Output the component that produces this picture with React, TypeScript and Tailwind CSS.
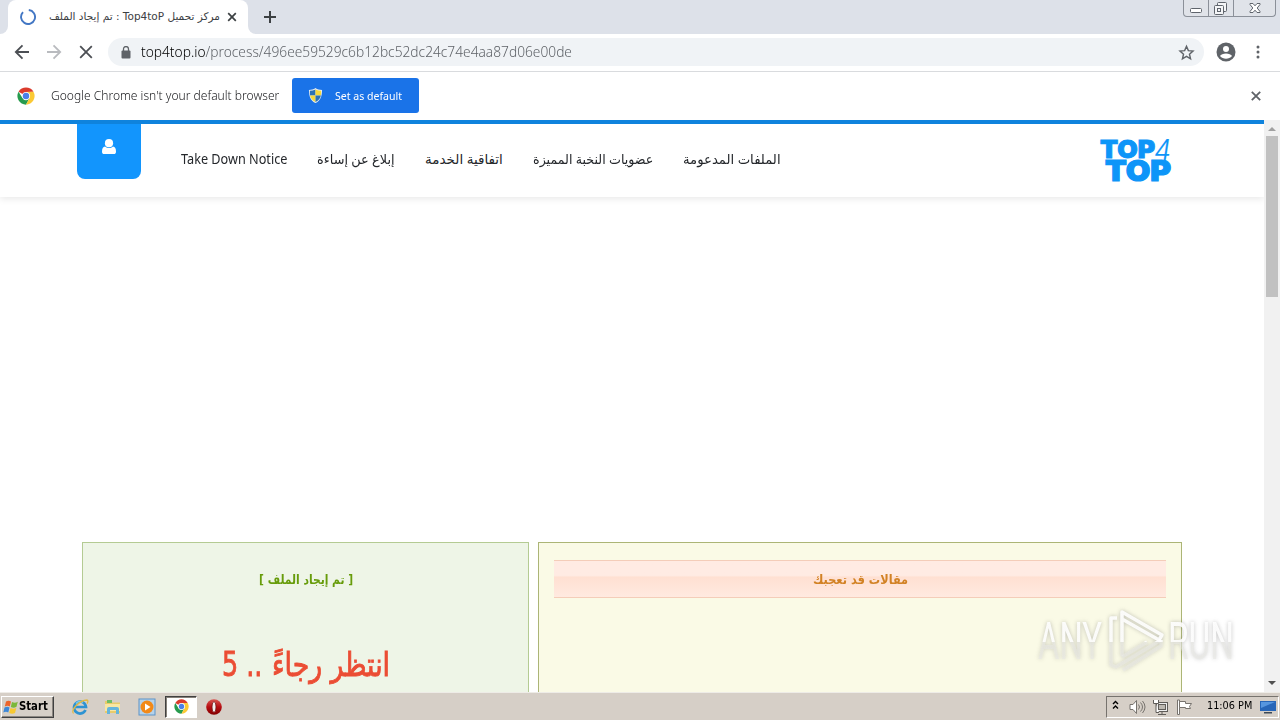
import { useLayoutEffect, useRef } from 'react'
import type { ReactNode } from 'react'

interface FitTextProps {
  width: number
  className?: string
  rtl?: boolean
  children: ReactNode
}

// Single line of text squeezed or stretched to a fixed width
function FitText({ width, className = '', rtl = false, children }: FitTextProps) {
  const outer = useRef<HTMLSpanElement>(null)
  const inner = useRef<HTMLSpanElement>(null)

  useLayoutEffect(() => {
    if (!outer.current || !inner.current) return
    outer.current.style.width = `${width}px`
    inner.current.style.transform = `scaleX(${width / inner.current.offsetWidth})`
  }, [width])

  return (
    <span ref={outer} className="flex shrink-0">
      <span ref={inner} dir={rtl ? 'rtl' : 'ltr'} className={`block shrink-0 origin-left whitespace-nowrap ${className}`}>
        {children}
      </span>
    </span>
  )
}

function ChromeLogo({ className }: { className: string }) {
  return (
    <svg viewBox="0 0 48 48" className={className}>
      <path d="M24 24 4.1 12.5A23 23 0 0 1 43.9 12.5L24 13Z" fill="#db3b2c" />
      <path d="M4.1 12.5A23 23 0 0 0 24 47l9.5-17.5L24 24 14.5 29.5Z" fill="#279b4e" />
      <path d="M43.9 12.5A23 23 0 0 1 24 47l9.5-17.5L24 13Z" fill="#fbc934" />
      <circle cx="24" cy="24" r="11" fill="#fff" />
      <circle cx="24" cy="24" r="8.6" fill="#4a80e8" />
    </svg>
  )
}

function TabStrip() {
  return (
    <div className="flex h-[34px] shrink-0 bg-[#dde1e9]">
      <div className="flex w-2 items-end bg-white">
        <div className="h-full w-2 rounded-br-lg bg-[#dde1e9]" />
      </div>
      <div className="flex w-60 items-center rounded-t-lg bg-white pl-3">
        <svg viewBox="0 0 16 16" className="size-4 shrink-0" fill="none">
          <path d="M8.8 1A7 7 0 1 1 3 3.1" stroke="#4377c4" strokeWidth="1.9" />
        </svg>
        <div className="ml-[13px]">
          <FitText width={171} rtl className="font-['DejaVu_Sans',sans-serif] text-[10.5px] text-[#3c4043]">
            مركز تحميل Top4toP : تم إيجاد الملف
          </FitText>
        </div>
        <svg viewBox="0 0 10 10" className="ml-[7px] size-[10px] shrink-0">
          <path d="m1.2 1.2 7.6 7.6m0-7.6L1.2 8.8" stroke="#3c4043" strokeWidth="1.7" />
        </svg>
      </div>
      <div className="flex w-2 bg-white">
        <div className="h-full w-2 rounded-bl-lg bg-[#dde1e9]" />
      </div>
      <svg viewBox="0 0 12 12" className="mt-[11px] ml-2 size-3">
        <path d="M6 0v12M0 6h12" stroke="#3c4043" strokeWidth="2" />
      </svg>
      <div className="mr-1 ml-auto flex h-[17px] w-[93px] rounded-b border border-t-0 border-[#8b9099] bg-[#e0e3e9]">
        <div className="w-[25px] border-r border-[#8b9099]">
          <svg viewBox="0 0 24 16" className="h-4 w-6" fill="#fff" stroke="#5f646c">
            <rect x="6.5" y="8.5" width="11" height="4" rx="1" />
          </svg>
        </div>
        <div className="w-[25px] border-r border-[#8b9099]">
          <svg viewBox="0 0 24 16" className="h-4 w-6" fill="#f4f5f7" stroke="#5f646c">
            <rect x="8.5" y="2.5" width="9" height="9" rx="1" />
            <rect x="5.5" y="5.5" width="9" height="9" rx="1" />
            <rect x="8.5" y="8.5" width="3" height="3" />
          </svg>
        </div>
        <div className="flex flex-1 justify-center">
          <svg viewBox="0 0 14 16" className="h-4 w-[14px]">
            <path
              d="M2 3.5h3l2 2.3 2-2.3h3v1L9.2 8l2.8 3.5v1H9l-2-2.3-2 2.3H2v-1L4.8 8 2 4.5Z"
              fill="#fff"
              stroke="#5f646c"
            />
          </svg>
        </div>
      </div>
    </div>
  )
}

function Toolbar() {
  return (
    <div className="flex h-[38px] shrink-0 items-center border-b border-[#d9dbde] bg-white pb-px pl-[14px]">
      <svg viewBox="0 0 16 16" className="size-4" fill="none" stroke="#4c4f54" strokeWidth="1.8">
        <path d="M15 8H2m6.500-6.700L1.800 8l6.700 6.700" />
      </svg>
      <svg viewBox="0 0 16 16" className="ml-4 size-4" fill="none" stroke="#b9bbbf" strokeWidth="1.8">
        <path d="M1 8h13M7.500 1.300 14.200 8l-6.700 6.700" />
      </svg>
      <svg viewBox="0 0 14 14" className="ml-[17px] size-[14px]" fill="none" stroke="#4c4f54" strokeWidth="1.8">
        <path d="m1.200 1.200 11.600 11.600m0-11.600L1.200 12.800" />
      </svg>
      <div className="ml-[15px] flex h-7 w-[1096px] items-center rounded-full bg-[#f0f3f6] pr-[9px] pl-[13px]">
        <svg viewBox="0 0 10 13" className="h-[13px] w-[10px]">
          <rect x="0.5" y="4.5" width="9" height="8" rx="1" fill="#5f6368" />
          <path d="M2.500 5V3a2.500 2.500 0 0 1 5 0v2" fill="none" stroke="#5f6368" strokeWidth="1.3" />
        </svg>
        <div className="ml-[10px]">
          <FitText width={431} className="font-['Noto_Sans',sans-serif] text-sm font-light text-[#5f6368]">
            <span className="text-black">top4top.io</span>/process/496ee59529c6b12bc52dc24c74e4aa87d06e00de
          </FitText>
        </div>
        <svg viewBox="0 0 24 24" className="ml-auto size-[17px]" fill="none" stroke="#5f6368" strokeWidth="2">
          <path d="m12 3.200 2.600 6.100 6.600.6-5 4.400 1.500 6.500-5.700-3.400-5.700 3.400 1.500-6.500-5-4.400 6.600-.6Z" />
        </svg>
      </div>
      <svg viewBox="0 0 20 20" className="ml-3 size-5">
        <circle cx="10" cy="10" r="9.5" fill="#5f6368" />
        <circle cx="10" cy="7" r="3" fill="#fff" />
        <path d="M4 14c1.500-3.400 10.500-3.400 12 0-3 3.700-9 3.700-12 0Z" fill="#fff" />
      </svg>
      <svg viewBox="0 0 4 14" className="ml-5 h-[14px] w-1" fill="#5f6368">
        <circle cx="2" cy="2" r="1.5" />
        <circle cx="2" cy="7" r="1.5" />
        <circle cx="2" cy="12" r="1.5" />
      </svg>
    </div>
  )
}

function DefaultBrowserBar() {
  return (
    <div className="flex h-12 shrink-0 items-center bg-white pb-px pl-[17px]">
      <ChromeLogo className="mt-px size-[18px]" />
      <div className="ml-4">
        <FitText width={228} className="font-['Noto_Sans',sans-serif] text-[13px] font-light text-[#202124]">
          Google Chrome isn't your default browser
        </FitText>
      </div>
      <button className="ml-[13px] flex h-[35px] w-[127px] items-center rounded-[3px] bg-[#1a73e8] pl-4">
        <svg viewBox="0 0 16 16" className="size-[15px]">
          <path d="M8 0c2 1.500 4.500 2 7 2 0 7-2 11.500-7 14C3 13.500 1 9 1 2c2.500 0 5-.5 7-2Z" fill="#e8eef2" />
          <path d="M8 1.500V8H2.200C2 6.500 2 5 2 3c2 0 4-.5 6-1.500Z" fill="#2c72b5" />
          <path d="M8 1.500V8h5.800c.2-1.500.2-3 .2-5-2 0-4-.5-6-1.500Z" fill="#f6d93b" />
          <path d="M8 8H2.200C3 11 4.500 13.500 8 15Z" fill="#f6d93b" />
          <path d="M8 8h5.800C13 11 11.500 13.500 8 15Z" fill="#2c72b5" />
        </svg>
        <div className="ml-3">
          <FitText width={67} className="font-['Noto_Sans',sans-serif] text-[11.5px] text-white">
            Set as default
          </FitText>
        </div>
      </button>
      <svg viewBox="0 0 10 10" className="mt-px mr-[19px] ml-auto size-[10px]">
        <path d="m.8.8 8.400 8.400m0-8.400L.8 9.200" stroke="#5f6368" strokeWidth="1.8" />
      </svg>
    </div>
  )
}

const navLinks = [
  { label: 'Take Down Notice', width: 106, rtl: false },
  { label: 'إبلاغ عن إساءة', width: 78, rtl: true },
  { label: 'اتفاقية الخدمة', width: 78, rtl: true },
  { label: 'عضويات النخبة المميزة', width: 120, rtl: true },
  { label: 'الملفات المدعومة', width: 98, rtl: true },
]

function SiteLogo() {
  return (
    <svg
      viewBox="0 0 74 46"
      className="mr-[91px] ml-auto h-[46px] w-[74px] font-['Inter',sans-serif]"
      fill="#0d95f8"
      stroke="#0d95f8"
    >
      <text x="1" y="20" fontSize="24.500" fontWeight="900" strokeWidth="0.9" textLength="55" lengthAdjust="spacingAndGlyphs">
        TOP
      </text>
      <text x="6" y="43" fontSize="29" fontWeight="900" strokeWidth="1.200" textLength="66" lengthAdjust="spacingAndGlyphs">
        TOP
      </text>
      <text
        x="55"
        y="22"
        fontSize="28"
        fontWeight="300"
        fontStyle="italic"
        strokeWidth="0.2"
        textLength="17"
        lengthAdjust="spacingAndGlyphs"
      >
        4
      </text>
    </svg>
  )
}

function SiteHeader() {
  return (
    <header className="flex h-[77px] shrink-0 border-t-4 border-[#0f83dd] bg-white pl-[77px] shadow-[0_2px_7px_rgba(0,0,0,0.09)]">
      <div className="flex h-[55px] w-16 justify-center rounded-b-lg bg-[#1295fd] pt-[15px]">
        <svg viewBox="0 0 14 16" className="h-4 w-[14px]" fill="#fff">
          <circle cx="7" cy="4.2" r="4.1" />
          <path d="M3 7.500c2.500 2 5.500 2 8 0 2 .2 3 2 3 5.200 0 1.500-.8 2.300-2.200 2.300H2.200C.8 15 0 14.200 0 12.700 0 9.500 1 7.700 3 7.500Z" />
        </svg>
      </div>
      <nav className="ml-10 flex h-[70px] items-center gap-[30px]">
        {navLinks.map((link) => (
          <FitText
            key={link.label}
            width={link.width}
            rtl={link.rtl}
            className="font-['Noto_Sans','DejaVu_Sans',sans-serif] text-[13.5px] text-[#24272b]"
          >
            {link.label}
          </FitText>
        ))}
      </nav>
      <div className="ml-auto flex items-start pt-[14px]">
        <SiteLogo />
      </div>
    </header>
  )
}

function Scrollbar() {
  return (
    <div className="flex w-4 shrink-0 flex-col items-center bg-[#f1f1f1] pt-[7px] pb-[7px]">
      <svg viewBox="0 0 8 4" className="h-1 w-2" fill="#a0a0a0">
        <path d="M0 4 4 0l4 4Z" />
      </svg>
      <div className="mt-[5px] h-[161px] w-3 bg-[#c1c1c1]" />
      <svg viewBox="0 0 8 4" className="mt-auto h-1 w-2" fill="#505050">
        <path d="m0 0 4 4 4-4Z" />
      </svg>
    </div>
  )
}

function SitePage() {
  return (
    <div className="flex h-[572px] shrink-0 overflow-hidden bg-white">
      <div className="flex w-[1264px] flex-col">
        <SiteHeader />
        <main className="mt-[345px] flex flex-1 items-stretch gap-[9px] pl-[82px]">
          <section className="flex w-[447px] flex-col items-center border border-b-0 border-[#b4cb93] bg-[#eef5e7]">
            <div className="mt-[25px]">
              <FitText
                width={94}
                rtl
                className="font-['DejaVu_Sans',sans-serif] text-[13px] leading-6 font-bold text-[#679c0b]"
              >
                [ تم إيجاد الملف ]
              </FitText>
            </div>
            <div className="mt-[49px] flex gap-[10px] font-['DejaVu_Sans',sans-serif] text-[33px] leading-[48px] text-[#eb4d34]">
              <FitText width={40} className="[-webkit-text-stroke:0.9px_#eb4d34]">
                5 ..
              </FitText>
              <FitText width={118} rtl className="[-webkit-text-stroke:0.9px_#eb4d34]">
                انتظر رجاءً
              </FitText>
            </div>
          </section>
          <section className="w-[644px] border border-b-0 border-[#acb576] bg-[#fafae6] px-[15px] pt-[17px]">
            <div className="flex h-[38px] items-center justify-center border-y border-[#f4cdb9] bg-linear-to-b from-[#ffebe3] from-40% via-[#ffe0d2] via-45% to-[#ffeae0] pt-0.5">
              <FitText width={95} rtl className="font-['DejaVu_Sans',sans-serif] text-[13px] font-bold text-[#d28224]">
                مقالات قد تعجبك
              </FitText>
            </div>
          </section>
        </main>
      </div>
      <Scrollbar />
    </div>
  )
}

function Watermark() {
  return (
    <svg
      viewBox="0 0 210 80"
      className="pointer-events-none absolute top-[600px] left-[1030px] h-20 w-[210px] font-['Roboto',sans-serif] drop-shadow-[0_0_2px_rgba(90,90,90,0.4)]"
    >
      <defs>
        <linearGradient id="markFade" x1="0" y1="0" x2="0" y2="80" gradientUnits="userSpaceOnUse">
          <stop offset="0.52" stopColor="#fff" stopOpacity="0.9" />
          <stop offset="0.53" stopColor="#e8e8e4" stopOpacity="0.6" />
        </linearGradient>
      </defs>
      <g fill="url(#markFade)">
        <text x="8" y="59" fontSize="52" textLength="64" lengthAdjust="spacingAndGlyphs">
          ANY
        </text>
        <text x="138" y="59" fontSize="52" textLength="66" lengthAdjust="spacingAndGlyphs">
          RUN
        </text>
      </g>
      <g fill="none" stroke="url(#markFade)" strokeWidth="3.5" strokeLinejoin="round">
        <path d="M87 18h-6v47l5 2 45-27" />
        <path d="M92 56V12l40 23-3 5-37-21" />
        <path d="M92 57l25-15M93 70l38-24v-6" />
      </g>
    </svg>
  )
}

function StartButton() {
  return (
    <button className="flex h-[22px] w-[53px] items-center border border-t-white border-r-[#404040] border-b-[#404040] border-l-white bg-[#d6cfc7] pl-px shadow-[inset_-1px_-1px_#8b8680]">
      <svg viewBox="0 0 16 16" className="h-4 w-4">
        <path d="M3 2.500c2-1.200 3.500-1 5 0L6.800 7.400c-1.600-1-3.200-1-5 0Z" fill="#ec642b" />
        <path d="M9 3c2 1 3.600 1 5.800-.2l-1.300 5C11.500 9 9.800 9 7.800 8Z" fill="#7bb83a" />
        <path d="M1.500 8.500c2-1 3.500-1 5 0l-1.200 5c-1.500-1-3.200-1-5 0Z" fill="#3d88d8" />
        <path d="M7.500 9c2 1 3.700 1 5.800 0L12 14c-2 1-3.800 1-5.800 0Z" fill="#f7c831" />
      </svg>
      <FitText width={29} className="font-['DejaVu_Sans',sans-serif] text-[11.5px] font-bold text-black">
        Start
      </FitText>
    </button>
  )
}

function Taskbar() {
  return (
    <div className="flex h-7 shrink-0 items-center border-t border-[#eeece7] bg-[#d6cfc7] pl-px">
      <StartButton />
      <svg viewBox="0 0 18 18" className="ml-[17px] size-[18px]" fill="none">
        <path d="M14.500 12A6 6 0 1 1 15 9H4.500" stroke="#2d93d2" strokeWidth="2.7" />
        <path d="M5 5.500a5 5 0 0 1 7-1" stroke="#75c9ef" strokeWidth="1.5" />
        <path d="M2.500 15.500C-1 13 8 2 16 2c1.500.3.8 2.500 0 3.500" stroke="#e0b944" strokeWidth="1.3" />
      </svg>
      <svg viewBox="0 0 18 18" className="ml-[15px] size-[18px]">
        <path d="M1 3h5l1 1.500h9V15H1Z" fill="#e9cb6a" />
        <path d="M3 2h5v3H3Z" fill="#70bd65" />
        <path d="M1 6h15v7H1Z" fill="#f8e7a3" />
        <path d="M3 16v-5q0-2 2-2h8q2 0 2 2v5h-3v-4H6v4Z" fill="#65b5dc" />
      </svg>
      <svg viewBox="0 0 18 18" className="ml-4 size-[18px]">
        <rect x="1" y="1" width="16" height="16" fill="#b5d2ea" stroke="#5c94c8" />
        <circle cx="9" cy="9" r="6.5" fill="#f28918" />
        <path d="m7 5.500 5.500 3.500L7 12.500Z" fill="#fff" />
      </svg>
      <div className="ml-[9px] flex h-[22px] w-8 items-center justify-center border border-t-[#404040] border-r-white border-b-white border-l-[#404040] bg-white shadow-[inset_1px_1px_#858079]">
        <ChromeLogo className="size-[15px]" />
      </div>
      <svg viewBox="0 0 16 16" className="ml-[9px] size-4">
        <defs>
          <linearGradient id="operaRed" x1="0" y1="0" x2="0" y2="1">
            <stop offset="0" stopColor="#d95550" />
            <stop offset="0.5" stopColor="#b60d12" />
            <stop offset="1" stopColor="#820000" />
          </linearGradient>
        </defs>
        <circle cx="8" cy="8" r="7.8" fill="url(#operaRed)" />
        <ellipse cx="8" cy="8" rx="2" ry="5.3" fill="#f3eded" stroke="#6f1010" strokeWidth="0.8" />
      </svg>
      <SystemTray />
    </div>
  )
}

function SystemTray() {
  return (
    <div className="mr-px ml-auto flex h-[22px] w-[173px] items-center border border-t-[#77736e] border-r-white border-b-white border-l-[#77736e] pl-[5px]">
      <svg viewBox="0 0 7 10" className="mb-[3px] h-[10px] w-[7px]" fill="none" stroke="#000" strokeWidth="1.4">
        <path d="m1 4 2.500-2.500L6 4M1 8.500 3.500 6 6 8.500" />
      </svg>
      <svg viewBox="0 0 17 16" className="ml-[10px] h-4 w-[17px]" fill="none" stroke="#77736e">
        <path d="M1 5.500h3L7.500 1.500v13L4 10.500H1Z" fill="#fff" />
        <path d="M9.500 5.500q2 2.500 0 5M11.500 3.500q4 4.500 0 9M13.500 2q5 6 0 12" />
      </svg>
      <svg viewBox="0 0 17 16" className="ml-[6px] h-4 w-[17px]" stroke="#605d59">
        <rect x="4.5" y="3.5" width="11" height="9" fill="#eee" />
        <rect x="6.5" y="5.5" width="7" height="5" fill="#bdb9b2" />
        <path d="M10 13v2M6 15.500h8M1.500 1v3.500h5V1M4 5v8.500h3" fill="#fff" />
      </svg>
      <svg viewBox="0 0 17 16" className="ml-[7px] h-4 w-[17px]" fill="#fff" stroke="#77736e">
        <path d="M1.500 1v14.500h2V1Z" />
        <path d="M3.500 2.500h6v2h6l-2 3 1 2h-5v-1h-6Z" />
      </svg>
      <div className="ml-[14px]">
        <FitText width={45} className="font-['DejaVu_Sans',sans-serif] text-[11px] text-black">
          11:06 PM
        </FitText>
      </div>
      <svg viewBox="0 0 16 14" className="ml-2 h-[14px] w-4">
        <rect y="1" width="16" height="10" fill="#2866b8" />
        <path d="M1 2h14L1 8Z" fill="#5796df" />
        <path d="M4 12h8v1.500H4Z" fill="#3b4857" />
      </svg>
    </div>
  )
}

export default function App() {
  return (
    <div className="relative flex h-[720px] w-[1280px] flex-col overflow-hidden bg-white">
      <TabStrip />
      <Toolbar />
      <DefaultBrowserBar />
      <SitePage />
      <Taskbar />
      <Watermark />
    </div>
  )
}
